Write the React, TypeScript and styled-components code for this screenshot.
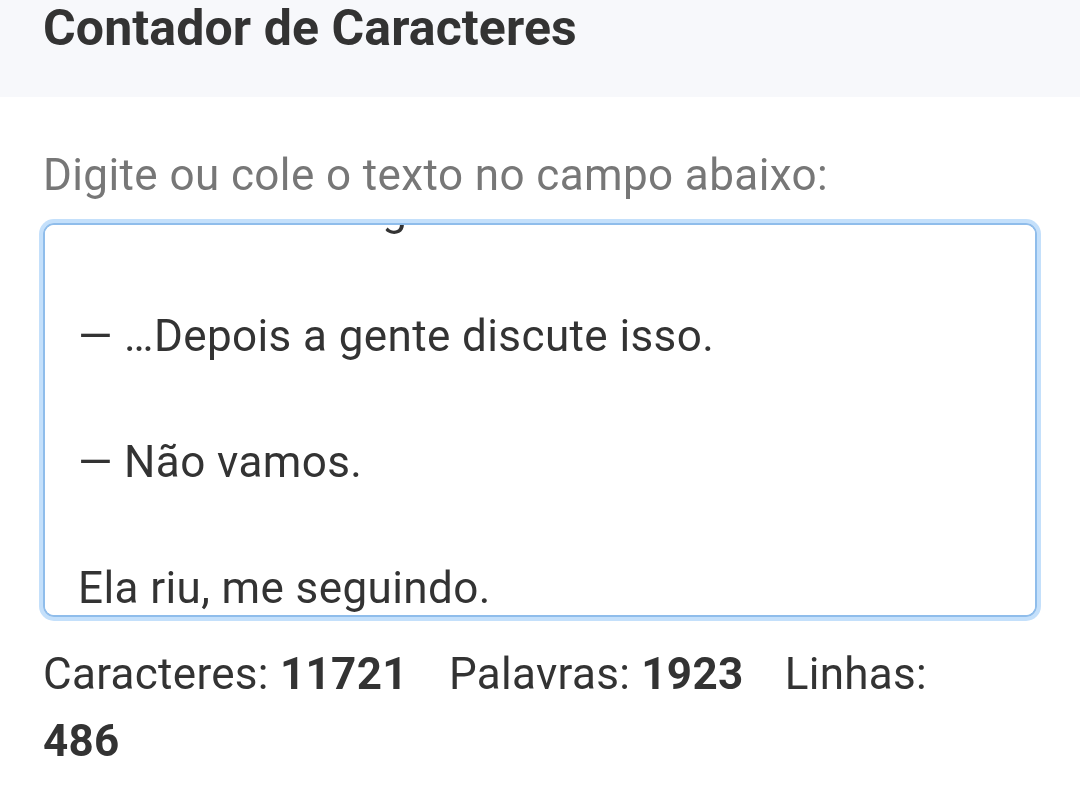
import React, { useLayoutEffect, useRef } from 'react';
import styled, { createGlobalStyle } from 'styled-components';

const GlobalStyle = createGlobalStyle`
  html, body {
    margin: 0;
    padding: 0;
    background: #ffffff;
    font-family: Roboto, "Noto Sans", sans-serif;
    color: #333333;
  }
`;

const Page = styled.div`
  width: 1080px;
  min-height: 785px;
  overflow: hidden;
`;

const Header = styled.header`
  height: 97px;
  background: #f7f8fb;
  padding: 0 43px;
  box-sizing: border-box;
`;

const Title = styled.h1`
  margin: 0;
  font-size: 50px;
  line-height: 56px;
  font-weight: 700;
  letter-spacing: 0.1px;
  color: #333333;
`;

const Main = styled.main`
  padding: 47px 43px 0 43px;
`;

const Label = styled.label`
  display: block;
  font-size: 44px;
  line-height: 63px;
  letter-spacing: 0.4px;
  color: #777777;
`;

const TextBox = styled.textarea`
  display: block;
  box-sizing: border-box;
  width: 994px;
  height: 394px;
  margin: 16px 0 0 0;
  padding: 0 30px 0 33px;
  font-family: Roboto, "Noto Sans", sans-serif;
  font-size: 44px;
  line-height: 63px;
  letter-spacing: 0.4px;
  color: #333333;
  background: #ffffff;
  border: 2px solid #8fbdeb;
  border-radius: 11px;
  box-shadow: 0 0 0 4px #c4e0fb;
  outline: none;
  resize: vertical;

  &::-webkit-scrollbar {
    width: 12px;
  }
  &::-webkit-scrollbar-track {
    background: transparent;
  }
  &::-webkit-scrollbar-thumb {
    background: #b8b8b8;
  }
  &::-webkit-resizer {
    background: transparent;
  }
`;

const Stats = styled.div`
  margin-top: 24px;
  max-width: 980px;
  font-size: 44px;
  line-height: 67px;
  letter-spacing: 0.3px;
  color: #333333;
`;

const Stat = styled.span`
  margin-right: 30px;
  b {
    font-weight: 700;
  }
`;

const ending = [
  '— Então vem logo.',
  '',
  '— …Depois a gente discute isso.',
  '',
  '— Não vamos.',
  '',
  'Ela riu, me seguindo.',
];

const filler: string[] = [];
for (let i = 0; i < 479; i++) {
  filler.push(i % 2 === 0 ? 'Ela olhou pela janela e ficou em silêncio.' : '');
}
const text = [...filler, ...ending].join('\n');

export default function App() {
  const ref = useRef<HTMLTextAreaElement>(null);

  useLayoutEffect(() => {
    const el = ref.current;
    if (el) el.scrollTop = el.scrollHeight - el.clientHeight - 5;
  }, []);

  return (
    <Page>
      <GlobalStyle />
      <Header>
        <Title>Contador de Caracteres</Title>
      </Header>
      <Main>
        <Label htmlFor="texto">Digite ou cole o texto no campo abaixo:</Label>
        <TextBox id="texto" ref={ref} defaultValue={text} spellCheck={false} />
        <Stats>
          <Stat>
            Caracteres: <b>11721</b>
          </Stat>{' '}
          <Stat>
            Palavras: <b>1923</b>
          </Stat>{' '}
          <Stat>
            Linhas: <b>486</b>
          </Stat>
        </Stats>
      </Main>
    </Page>
  );
}
